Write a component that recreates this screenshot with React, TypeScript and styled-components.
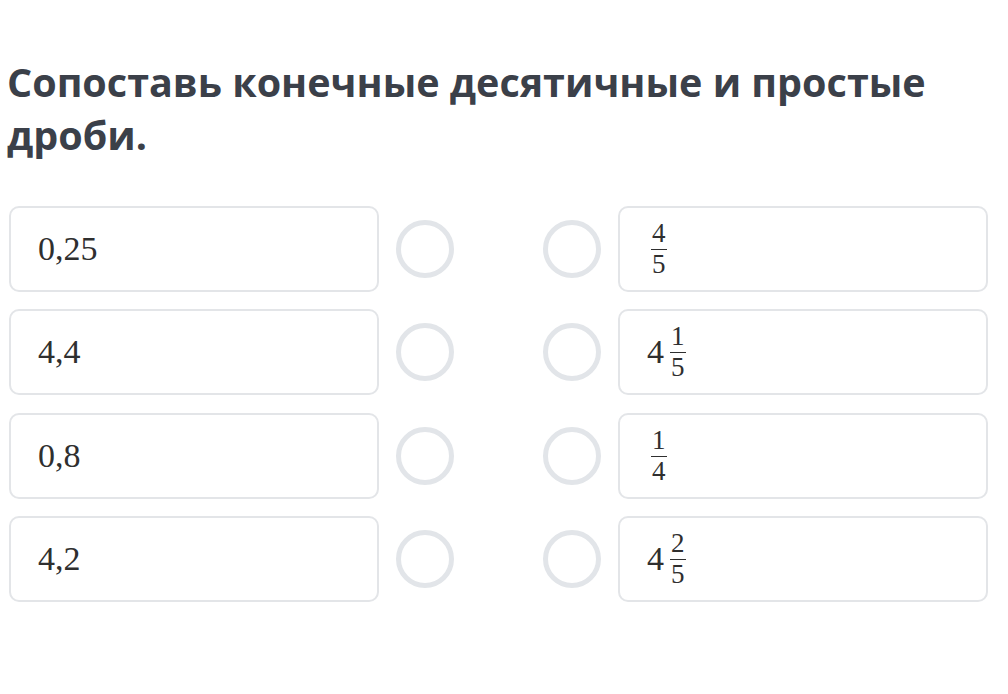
import React from 'react';
import styled, { createGlobalStyle } from 'styled-components';

const GlobalStyle = createGlobalStyle`
  html, body {
    margin: 0;
    padding: 0;
    background: #fff;
  }
`;

const Page = styled.div`
  padding: 56px 19px 0 9px;
`;

const Title = styled.h1`
  margin: 0 0 44px -2px;
  font-family: 'Open Sans', 'Noto Sans', sans-serif;
  font-weight: 700;
  font-size: 39.5px;
  line-height: 53px;
  color: #3b4049;
`;

const Board = styled.div`
  display: grid;
  grid-template-columns: 370px 58px 1fr 58px 370px;
  grid-auto-rows: 86px;
  column-gap: 17px;
  row-gap: 17.3px;
  width: 979px;
`;

const Card = styled.div`
  box-sizing: border-box;
  display: flex;
  align-items: center;
  padding-left: 27px;
  border: 2px solid #e3e5e8;
  border-radius: 10px;
  background: #fff;
  font-family: 'Liberation Serif', 'DejaVu Serif', serif;
  font-size: 34px;
  color: #2f2f2f;
`;

const Radio = styled.div`
  align-self: center;
  box-sizing: border-box;
  width: 58px;
  height: 58px;
  border-radius: 50%;
  border: 5px solid #e2e5e9;
`;

const Gap = styled.div``;

const Mixed = styled.span`
  display: inline-flex;
  align-items: center;
  gap: 2px;
  line-height: 1;
`;

const Frac = styled.span`
  display: inline-flex;
  flex-direction: column;
  align-items: center;
  margin: 0 4px;
  font-size: 27px;
  line-height: 1;
`;

const Num = styled.span`
  padding: 0 1px 2px;
`;

const Den = styled.span`
  padding: 1px 1px 0;
  border-top: 1.8px solid #2f2f2f;
  align-self: stretch;
  text-align: center;
`;

type Value = { whole?: string; num?: string; den?: string; text?: string };

const left: Value[] = [{ text: '0,25' }, { text: '4,4' }, { text: '0,8' }, { text: '4,2' }];
const right: Value[] = [
  { num: '4', den: '5' },
  { whole: '4', num: '1', den: '5' },
  { num: '1', den: '4' },
  { whole: '4', num: '2', den: '5' },
];

const Fraction: React.FC<{ num: string; den: string }> = ({ num, den }) => (
  <Frac>
    <Num>{num}</Num>
    <Den>{den}</Den>
  </Frac>
);

const Content: React.FC<{ value: Value }> = ({ value }) => {
  if (value.text) return <span>{value.text}</span>;
  if (value.whole)
    return (
      <Mixed>
        {value.whole}
        <Fraction num={value.num!} den={value.den!} />
      </Mixed>
    );
  return <Fraction num={value.num!} den={value.den!} />;
};

const App: React.FC = () => (
  <Page>
    <GlobalStyle />
    <Title>
      Сопоставь конечные десятичные и простые
      <br />
      дроби.
    </Title>
    <Board>
      {left.map((l, i) => (
        <React.Fragment key={i}>
          <Card>
            <Content value={l} />
          </Card>
          <Radio />
          <Gap />
          <Radio />
          <Card>
            <Content value={right[i]} />
          </Card>
        </React.Fragment>
      ))}
    </Board>
  </Page>
);

export default App;
